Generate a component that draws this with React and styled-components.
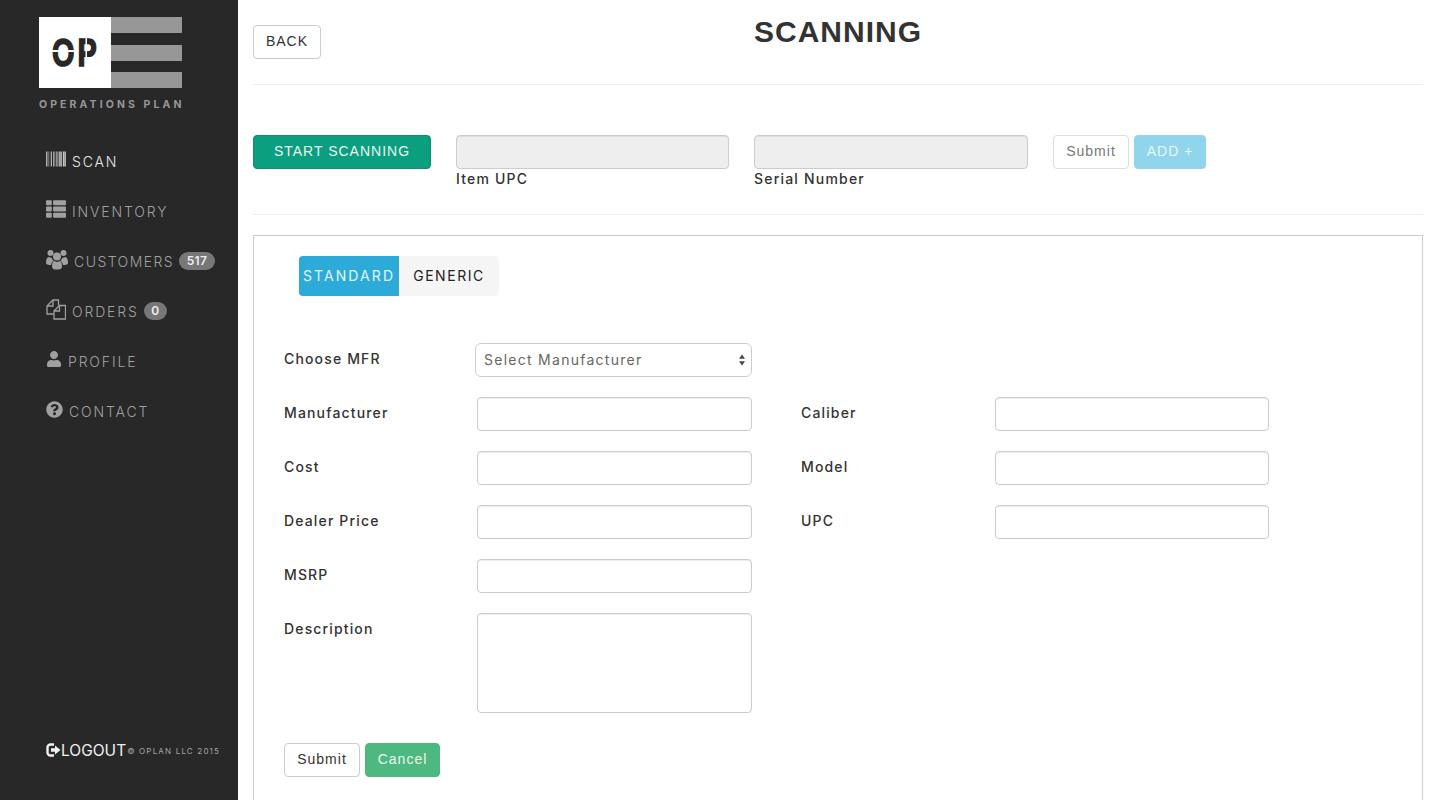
import styled, { createGlobalStyle } from 'styled-components';
import { FaBarcode, FaThList, FaUser, FaQuestionCircle } from 'react-icons/fa';

const GlobalStyle = createGlobalStyle`
    html, body {
        margin: 0;
        height: 800px;
        overflow: hidden;
        background: #fff;
        font-family: "Inter", "Liberation Sans", sans-serif;
    }
    * { box-sizing: border-box; }
`;

const Page = styled.div`
    display: flex;
    height: 800px;
    overflow: hidden;
`;

const Sidebar = styled.aside`
    display: flex;
    flex-direction: column;
    flex: 0 0 238px;
    padding: 17px 0 40px 39px;
    background-color: #282828;
`;

const LogoMark = styled.svg`
    display: block;
    width: 143px;
    height: 71px;
`;

const LogoText = styled.div`
    margin-top: 10px;
    font-size: 10.5px;
    line-height: 14px;
    font-weight: 700;
    letter-spacing: 3.1px;
    color: #979797;
    white-space: nowrap;
`;

const Nav = styled.nav`
    display: flex;
    flex-direction: column;
    margin: 24px 0 0 7px;
`;

const NavItem = styled.a`
    display: flex;
    align-items: center;
    height: 50px;
    gap: 6px;
    font-size: 14px;
    font-weight: 300;
    letter-spacing: ${(p) => p.$spacing || 1.85}px;
    color: ${(p) => (p.$active ? '#e8e8e8' : '#a0a0a0')};
    svg {
        flex: none;
        font-size: ${(p) => p.$icon || 20}px;
        margin-top: -4px;
    }
`;

const Badge = styled.span`
    margin-left: -1px;
    padding: 0 7.5px;
    height: 18px;
    border-radius: 9px;
    background-color: #777;
    font-size: 12px;
    line-height: 18px;
    font-weight: 600;
    letter-spacing: 0.4px;
    color: #eee;
`;

const Footer = styled.div`
    display: flex;
    align-items: center;
    margin: auto 0 0 7px;
    white-space: nowrap;
`;

const LogoutIcon = styled.svg`
    width: 15px;
    height: 14px;
    margin-top: -2px;
`;

const Logout = styled.span`
    font-size: 15.5px;
    color: #f0f0f0;
`;

const Copyright = styled.span`
    margin-left: 1px;
    font-size: 8px;
    letter-spacing: 1.18px;
    color: #a5a5a5;
`;

const Main = styled.main`
    flex: 1;
    min-width: 0;
    padding: 25px 15px 0;
`;

const Header = styled.header`
    display: grid;
    grid-template-columns: 1fr auto 1fr;
    align-items: start;
    height: 60px;
    border-bottom: 1px solid #eee;
`;

const Title = styled.h1`
    margin: -11px 0 0;
    font-family: "Liberation Sans", sans-serif;
    font-size: 30px;
    line-height: 36px;
    font-weight: 700;
    letter-spacing: 1px;
    color: #333;
`;

const Button = styled.button`
    height: 34px;
    width: ${(p) => p.$width}px;
    padding: 0 0 2px;
    border: 1px solid ${(p) => p.$border || '#ccc'};
    border-radius: 4px;
    background-color: ${(p) => p.$bg || '#fff'};
    font-family: "Liberation Sans", sans-serif;
    font-size: 14px;
    letter-spacing: 1px;
    color: ${(p) => p.$color || '#333'};
`;

const ScanRow = styled.section`
    display: flex;
    align-items: flex-start;
    gap: 25px;
    height: 130px;
    padding-top: 50px;
    border-bottom: 1px solid #eee;
`;

const ScanField = styled.div`
    width: ${(p) => p.$width}px;
`;

const DisabledInput = styled.input`
    display: block;
    width: 100%;
    height: 34px;
    border: 1px solid #ccc;
    border-radius: 4px;
    background-color: #eee;
    box-shadow: inset 0 1px 1px rgba(0, 0, 0, 0.075);
`;

const ScanLabel = styled.label`
    display: block;
    margin-top: 1px;
    font-size: 14px;
    line-height: 17px;
    font-weight: 500;
    letter-spacing: 1.2px;
    color: #333;
`;

const ButtonPair = styled.div`
    display: flex;
    gap: 5px;
`;

const Panel = styled.section`
    height: 700px;
    margin-top: 20px;
    padding: 20px 30px;
    border: 1px solid #ccc;
`;

const Tabs = styled.div`
    display: flex;
    margin-left: 15px;
`;

const Tab = styled.div`
    width: 100px;
    height: 40px;
    border-radius: ${(p) => (p.$active ? '4px 0 0 4px' : '0 4px 4px 0')};
    background-color: ${(p) => (p.$active ? '#2cabd8' : '#f5f5f5')};
    font-size: 14px;
    line-height: 40px;
    text-align: center;
    letter-spacing: ${(p) => (p.$active ? 2.1 : 1.55)}px;
    color: ${(p) => (p.$active ? '#e4f5fb' : '#222')};
`;

const SelectRow = styled.div`
    display: flex;
    align-items: center;
    margin: 47px 0 20px;
`;

const Select = styled.div`
    display: flex;
    align-items: center;
    justify-content: space-between;
    width: 277px;
    height: 34px;
    margin-left: 191px;
    padding: 0 5px 2px 8px;
    border: 1px solid #ccc;
    border-radius: 6px;
    font-size: 14px;
    letter-spacing: 1.27px;
    color: #666;
`;

const SelectArrows = styled.svg`
    width: 8px;
    height: 14px;
    margin-top: 2px;
`;

const Columns = styled.div`
    display: flex;
    gap: 49px;
`;

const Column = styled.div`
    display: flex;
    flex-direction: column;
    gap: 20px;
    width: ${(p) => p.$width}px;
`;

const Field = styled.div`
    display: flex;
    align-items: flex-start;
`;

const FieldLabel = styled.label`
    width: ${(p) => p.$width || 193}px;
    flex: none;
    font-size: 14px;
    line-height: 32px;
    font-weight: 500;
    letter-spacing: 1.15px;
    color: #333;
`;

const SelectLabel = styled(FieldLabel)`
    position: absolute;
    margin-top: -2px;
`;

const TextInput = styled.input`
    display: block;
    flex: 1;
    min-width: 0;
    height: 34px;
    border: 1px solid #ccc;
    border-radius: 4px;
    background-color: #fff;
    box-shadow: inset 0 1px 1px rgba(0, 0, 0, 0.075);
`;

const TextArea = styled.textarea`
    display: block;
    flex: 1;
    min-width: 0;
    height: 100px;
    border: 1px solid #ccc;
    border-radius: 4px;
    resize: none;
    box-shadow: inset 0 1px 1px rgba(0, 0, 0, 0.075);
`;

const FormActions = styled.div`
    display: flex;
    gap: 5px;
    margin-top: 30px;
`;

const UsersIcon = () => (
    <svg width="22" height="21" viewBox="0 0 22 21" fill="currentColor">
        <circle cx="4.500" cy="4" r="3" />
        <circle cx="17.500" cy="4" r="3" />
        <circle cx="11" cy="7.500" r="4" />
        <path d="M0 14c0-4 1-6 3-6 .8.6 1.600.9 2.700.8.300 1.400 1 2.500 2 3.200-1.500.6-2.400 2.100-2.700 4C2 16 0 15.500 0 14z" />
        <path d="M22 14c0-4-1-6-3-6-.8.6-1.600.9-2.700.8-.3 1.400-1 2.500-2 3.200 1.500.6 2.400 2.100 2.700 4 3 0 5-.5 5-2z" />
        <path d="M6 17c0-3 1-5 2.500-5 1.500 1.300 3.500 1.300 5 0 1.500 0 2.500 2 2.500 5 0 2.500-1.500 3.500-3 3.500H9c-1.500 0-3-1-3-3.500z" />
    </svg>
);

const OrdersIcon = () => (
    <svg width="20" height="21" viewBox="0 0 20 21" fill="none" stroke="currentColor" strokeWidth="1.300">
        <path d="M12.500 6.500V1H7L1 7v8h6.500" />
        <path d="M7 1v6H1" />
        <path d="M13.500 6.500L8 12v8h11.500V6.500z" />
        <path d="M13.500 6.500V12H8" />
    </svg>
);

const navItems = [
    { label: 'SCAN', icon: <FaBarcode />, active: true },
    { label: 'INVENTORY', icon: <FaThList /> },
    { label: 'CUSTOMERS', icon: <UsersIcon />, spacing: 1.45, badge: 517 },
    { label: 'ORDERS', icon: <OrdersIcon />, badge: 0 },
    { label: 'PROFILE', icon: <FaUser />, icon_size: 16 },
    { label: 'CONTACT', icon: <FaQuestionCircle />, icon_size: 17 },
];

const leftFields = ['Manufacturer', 'Cost', 'Dealer Price', 'MSRP'];
const rightFields = ['Caliber', 'Model', 'UPC'];

function Logo() {
    return (
        <LogoMark viewBox="0 0 143 71">
            <rect width="72" height="71" fill="#fff" />
            <rect x="72" width="71" height="16" fill="#979797" />
            <rect x="72" y="28" width="71" height="16" fill="#979797" />
            <rect x="72" y="55" width="71" height="16" fill="#979797" />
            <text transform="translate(13 49) scale(.76 1)" fontFamily="Liberation Sans" fontWeight="700" fontSize="38" letterSpacing="4" fill="#282828" stroke="#282828" strokeWidth="1.500">OP</text>
            <rect x="12" y="33" width="26" height="2" fill="#fff" />
            <rect x="46.500" y="20" width="1.500" height="22" fill="#fff" />
        </LogoMark>
    );
}

export default function App() {
    return (
        <Page>
            <GlobalStyle />
            <Sidebar>
                <Logo />
                <LogoText>OPERATIONS PLAN</LogoText>
                <Nav>
                    {navItems.map((item) => (
                        <NavItem key={item.label} $active={item.active} $icon={item.icon_size} $spacing={item.spacing}>
                            {item.icon}
                            {item.label}
                            {item.badge !== undefined && <Badge>{item.badge}</Badge>}
                        </NavItem>
                    ))}
                </Nav>
                <Footer>
                    <LogoutIcon viewBox="0 0 15 14">
                        <path d="M8 1.500H4.500A3 3 0 0 0 1.500 4.500v5a3 3 0 0 0 3 3H8" fill="none" stroke="#f0f0f0" strokeWidth="2.400" />
                        <path d="M5 5.200h4V2.500L14.500 7 9 11.500V8.800H5z" fill="#f0f0f0" />
                    </LogoutIcon>
                    <Logout>LOGOUT</Logout>
                    <Copyright>© OPLAN LLC 2015</Copyright>
                </Footer>
            </Sidebar>
            <Main>
                <Header>
                    <div>
                        <Button $width={68}>BACK</Button>
                    </div>
                    <Title>SCANNING</Title>
                </Header>
                <ScanRow>
                    <Button $width={178} $bg="#0b9e7f" $border="#0a8f6a" $color="#e6f6f2">START SCANNING</Button>
                    <ScanField $width={273}>
                        <DisabledInput disabled />
                        <ScanLabel>Item UPC</ScanLabel>
                    </ScanField>
                    <ScanField $width={274}>
                        <DisabledInput disabled />
                        <ScanLabel>Serial Number</ScanLabel>
                    </ScanField>
                    <ButtonPair>
                        <Button $width={76} $border="#ddd" $color="#777">Submit</Button>
                        <Button $width={72} $bg="#90d5ec" $border="#90d5ec" $color="#e9f7fb">ADD +</Button>
                    </ButtonPair>
                </ScanRow>
                <Panel>
                    <Tabs>
                        <Tab $active>STANDARD</Tab>
                        <Tab>GENERIC</Tab>
                    </Tabs>
                    <SelectRow>
                        <SelectLabel>Choose MFR</SelectLabel>
                        <Select>
                            Select Manufacturer
                            <SelectArrows viewBox="0 0 8 14">
                                <path d="M4 1.500l3 4.200H1zM4 12.500L1 8.300h6z" fill="#444" />
                            </SelectArrows>
                        </Select>
                    </SelectRow>
                    <Columns>
                        <Column $width={468}>
                            {leftFields.map((name) => (
                                <Field key={name}>
                                    <FieldLabel>{name}</FieldLabel>
                                    <TextInput />
                                </Field>
                            ))}
                            <Field>
                                <FieldLabel>Description</FieldLabel>
                                <TextArea />
                            </Field>
                        </Column>
                        <Column $width={468}>
                            {rightFields.map((name) => (
                                <Field key={name}>
                                    <FieldLabel $width={194}>{name}</FieldLabel>
                                    <TextInput />
                                </Field>
                            ))}
                        </Column>
                    </Columns>
                    <FormActions>
                        <Button $width={76}>Submit</Button>
                        <Button $width={75} $bg="#4db980" $border="#4db980" $color="#e8f7ef">Cancel</Button>
                    </FormActions>
                </Panel>
            </Main>
        </Page>
    );
}
